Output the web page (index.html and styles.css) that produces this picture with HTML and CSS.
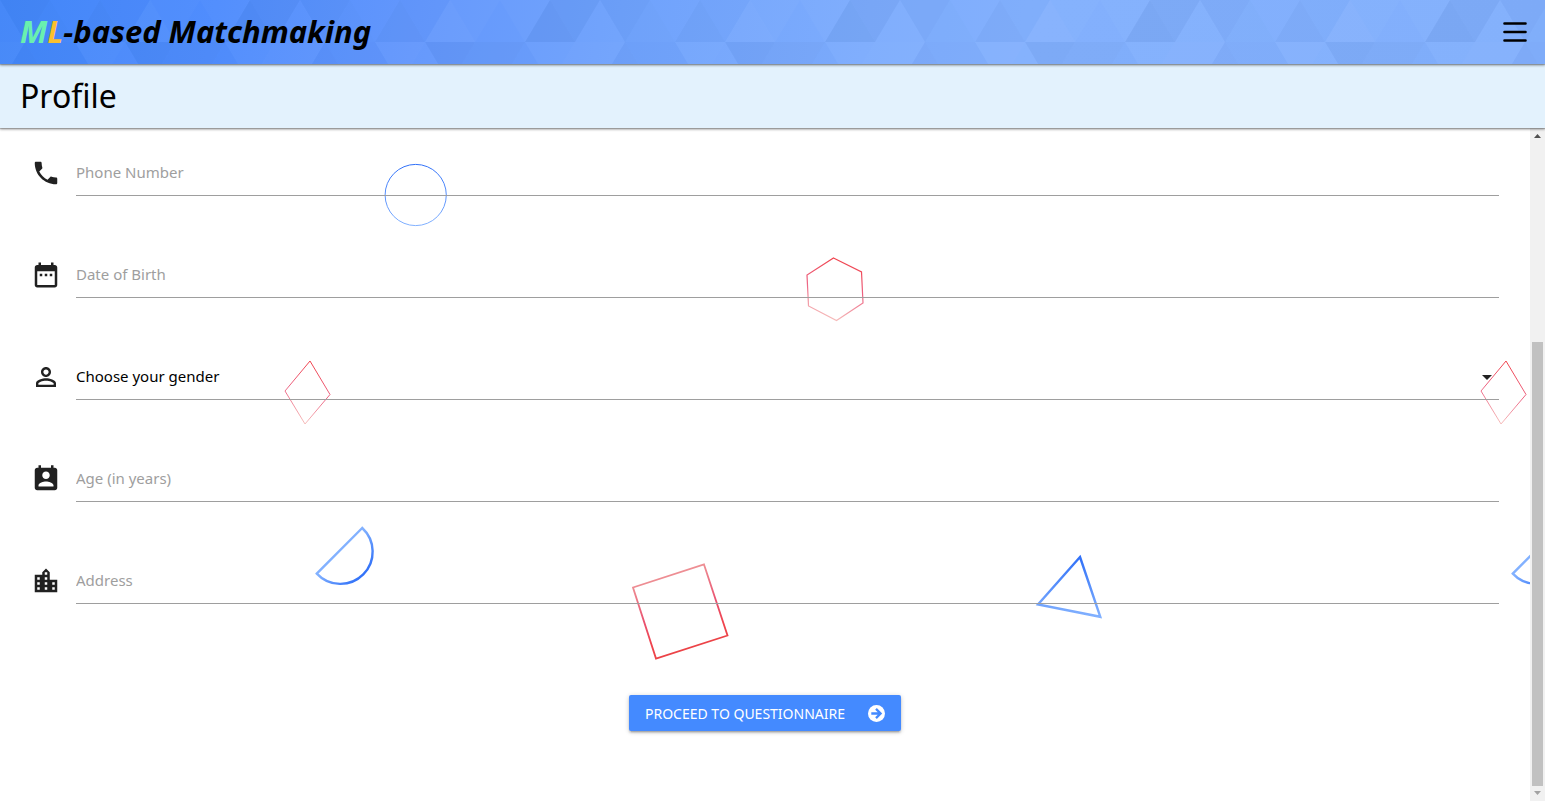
FILE: index.html
```html
<!DOCTYPE html>
<html lang="en">
<head>
<meta charset="utf-8">
<title>ML-based Matchmaking</title>
<link rel="stylesheet" href="styles.css">
</head>
<body>
<header class="topbar">
  <svg class="topbar-art" aria-hidden="true">
    <defs>
      <pattern id="tri" width="300" height="86" patternUnits="userSpaceOnUse">
        <g fill="#fff">
          <path opacity=".04" d="M150 0l25 42h-50z"/>
          <path opacity=".02" d="M150 0h50l-25 42zM200 0h50l-25 42z"/>
          <path opacity=".02" d="M0 0l25 42H0zM300 0v42h-25z"/>
          <path opacity=".03" d="M75 42h50l-25 42z"/>
          <path opacity=".02" d="M125 42l25 42h-50z"/>
          <path opacity=".02" d="M225 42h50l-25 42z"/>
          <path opacity=".03" d="M275 42l25 42h-50zM275 42h25v42zM0 42h25L0 84z"/>
        </g>
        <g fill="#123a80">
          <path opacity=".045" d="M100 0l25 42H75zM0 0h50L25 42z"/>
          <path opacity=".02" d="M100 0h50l-25 42z"/>
          <path opacity=".01" d="M50 0l25 42H25z"/>
          <path opacity=".065" d="M250 0l25 42h-50z"/>
          <path opacity=".05" d="M250 0h50l-25 42z"/>
          <path opacity=".05" d="M125 42h50l-25 42z"/>
          <path opacity=".035" d="M175 42l25 42h-50zM175 42h50l-25 42z"/>
          <path opacity=".02" d="M225 42l25 42h-50z"/>
          <path opacity=".04" d="M25 42l25 42H0z"/>
          <path opacity=".025" d="M25 42h50L50 84zM75 42l25 42H50z"/>
        </g>
      </pattern>
    </defs>
    <rect width="100%" height="100%" fill="url(#tri)"/>
  </svg>
  <a class="brand" href="#"><span class="brand-m">M</span><span class="brand-l">L</span>-based Matchmaking</a>
  <button class="menu" type="button" aria-label="Menu">
    <svg width="24" height="22" viewBox="0 0 24 22" aria-hidden="true"><path d="M1.500 2.500h21M1.500 11h21M1.500 19.500h21" stroke="#000" stroke-width="2.600" stroke-linecap="round"/></svg>
  </button>
</header>
<div class="titlebar"><h1>Profile</h1></div>
<main class="page">
  <div class="content">
    <svg class="shapes" aria-hidden="true">
      <defs>
        <linearGradient id="blue" x1="0" y1="0" x2="0" y2="1"><stop offset="0" stop-color="#3070f8"/><stop offset="1" stop-color="#82b1ff"/></linearGradient>
        <linearGradient id="blueDiag" x1=".43" y1=".43" x2=".85" y2=".85"><stop offset="0" stop-color="#82b1ff"/><stop offset="1" stop-color="#2f70f8"/></linearGradient>
        <linearGradient id="red" x1=".6" y1="0" x2=".4" y2="1"><stop offset="0" stop-color="#f0434c"/><stop offset=".5" stop-color="#ec6383"/><stop offset="1" stop-color="#f6c0bd"/></linearGradient>
        <linearGradient id="redUp" x1=".35" y1="0" x2=".65" y2="1"><stop offset="0" stop-color="#efa09e"/><stop offset=".5" stop-color="#e9516f"/><stop offset=".75" stop-color="#f0434c"/><stop offset="1" stop-color="#e84343"/></linearGradient>
        <pattern id="scatter" width="1196" height="700" patternUnits="userSpaceOnUse">
          <g fill="none">
            <circle cx="415.700" cy="67" r="30.600" stroke="url(#blue)"/>
            <path d="M833.500 130L861.500 144L863 175L836.500 192.500L808.500 178L807 147Z" stroke="url(#red)" stroke-width="1.200"/>
            <path d="M310 233L330 266.500L305 296L285 263Z" stroke="url(#red)"/>
            <path d="M362.200 400L316.800 445.600A32.200 32.200 0 1 0 362.200 400Z" stroke="url(#blueDiag)" stroke-width="2.400"/>
            <path d="M704 436.500L727.500 507.500L656 530.500L633 459.500Z" stroke="url(#redUp)" stroke-width="1.800"/>
            <path d="M1080 429L1100.300 488.800L1038 476.500Z" stroke="url(#blue)" stroke-width="2.400"/>
          </g>
        </pattern>
      </defs>
      <rect width="100%" height="100%" fill="url(#scatter)"/>
    </svg>
    <form class="form">
      <div class="field">
        <svg class="icon" viewBox="0 0 24 24" aria-hidden="true"><path d="M6.620 10.790c1.440 2.830 3.760 5.140 6.590 6.590l2.200-2.200c.27-.27.67-.36 1.020-.24 1.120.37 2.330.57 3.570.57.55 0 1 .45 1 1V20c0 .55-.45 1-1 1-9.390 0-17-7.610-17-17 0-.55.45-1 1-1h3.500c.55 0 1 .45 1 1 0 1.250.2 2.450.57 3.570.11.35.03.74-.25 1.020l-2.200 2.200z"/></svg>
        <input class="control" type="tel" aria-label="Phone Number" placeholder="Phone Number">
      </div>
      <div class="field">
        <svg class="icon" viewBox="0 0 24 24" aria-hidden="true"><path d="M9 11H7v2h2v-2zm4 0h-2v2h2v-2zm4 0h-2v2h2v-2zm2-7h-1V2h-2v2H8V2H6v2H5c-1.110 0-1.990.9-1.990 2L3 20c0 1.100.89 2 2 2h14c1.100 0 2-.9 2-2V6c0-1.100-.9-2-2-2zm0 16H5V9h14v11z"/></svg>
        <input class="control" type="text" aria-label="Date of Birth" placeholder="Date of Birth">
      </div>
      <div class="field">
        <svg class="icon" viewBox="0 0 24 24" aria-hidden="true"><path d="M12 5.900c1.160 0 2.100.94 2.100 2.100s-.94 2.100-2.100 2.100S9.900 9.160 9.900 8s.94-2.100 2.100-2.100m0 9c2.970 0 6.100 1.460 6.100 2.100v1.100H5.900V17c0-.64 3.130-2.100 6.100-2.100M12 4C9.790 4 8 5.790 8 8s1.790 4 4 4 4-1.790 4-4-1.790-4-4-4zm0 9c-2.670 0-8 1.340-8 4v3h16v-3c0-2.660-5.330-4-8-4z"/></svg>
        <select class="control select" aria-label="Gender"><option>Choose your gender</option><option>Male</option><option>Female</option></select>
        <svg class="caret" viewBox="0 0 10 5" aria-hidden="true"><path d="M0 0h10L5 5z"/></svg>
      </div>
      <div class="field">
        <svg class="icon" viewBox="0 0 24 24" aria-hidden="true"><path d="M19 3h-1V1h-2v2H8V1H6v2H5c-1.110 0-2 .9-2 2v14c0 1.100.89 2 2 2h14c1.100 0 2-.9 2-2V5c0-1.100-.9-2-2-2zm-7 3c1.660 0 3 1.340 3 3s-1.340 3-3 3-3-1.340-3-3 1.340-3 3-3zm6 12H6v-1c0-2 4-3.100 6-3.100s6 1.100 6 3.100v1z"/></svg>
        <input class="control" type="text" aria-label="Age (in years)" placeholder="Age (in years)">
      </div>
      <div class="field">
        <svg class="icon" viewBox="0 0 24 24" aria-hidden="true"><path d="M15 11V5l-3-3-3 3v2H3v14h18V11h-6zm-8 8H5v-2h2v2zm0-4H5v-2h2v2zm0-4H5V9h2v2zm6 8h-2v-2h2v2zm0-4h-2v-2h2v2zm0-4h-2V9h2v2zm0-4h-2V5h2v2zm6 12h-2v-2h2v2zm0-4h-2v-2h2v2z"/></svg>
        <input class="control" type="text" aria-label="Address" placeholder="Address">
      </div>
      <button class="submit" type="button">
        <span>PROCEED TO QUESTIONNAIRE</span>
        <svg width="17" height="17" viewBox="0 0 17 17" aria-hidden="true"><circle cx="8.500" cy="8.500" r="8.500" fill="#fff"/><path d="M3.300 8.500h9M8 3.900l4.600 4.600L8 13.100" fill="none" stroke="#448aff" stroke-width="2.300"/></svg>
      </button>
    </form>
  </div>
  <div class="scrollbar" aria-hidden="true">
    <svg class="arrow" viewBox="0 0 15 15"><path d="M4 10h7L7.500 6z" fill="#505050"/></svg>
    <div class="track"><div class="thumb"></div></div>
    <svg class="arrow" viewBox="0 0 15 15"><path d="M4 5h7L7.500 9z" fill="#a3a3a3"/></svg>
  </div>
</main>
</body>
</html>
```
FILE: styles.css
```css
* { box-sizing: border-box; }

body {
  margin: 0;
  height: 100vh;
  display: flex;
  flex-direction: column;
  overflow: hidden;
  background: #fff;
  color: #000;
  font-family: "Noto Sans", "Open Sans", sans-serif;
}

.topbar,
.titlebar {
  position: relative;
  flex: none;
  height: 64px;
  display: flex;
  align-items: center;
  padding: 0 18px 0 20px;
  box-shadow: 0 2px 2px rgba(0, 0, 0, 0.14), 0 1px 3px rgba(0, 0, 0, 0.2), 0 1px 1px rgba(0, 0, 0, 0.2);
}

.topbar {
  z-index: 3;
  justify-content: space-between;
  background: linear-gradient(100deg, #4286f8 0%, #508dfd 14%, #6397fc 27%, #6fa2fc 40%, #7dacfd 56%, #83b0fd 66%, #82affc 100%);
}

.topbar-art {
  position: absolute;
  inset: 0;
  width: 100%;
  height: 100%;
}

.brand {
  position: relative;
  color: #000;
  font-size: 31px;
  line-height: 62px;
  padding-bottom: 2px;
  font-weight: 700;
  font-style: italic;
  text-decoration: none;
}

.brand-m { color: #69f0ae; }
.brand-l { color: #fbc02d; }

.menu {
  position: relative;
  display: flex;
  padding: 0;
  border: 0;
  background: none;
}

.titlebar {
  z-index: 2;
  background: #e3f2fd;
}

.titlebar h1 {
  margin: 0;
  font-size: 32px;
  line-height: 64px;
  font-weight: 400;
}

.page {
  flex: 1;
  min-height: 0;
  display: flex;
}

.content {
  position: relative;
  flex: 1;
  min-width: 0;
}

.shapes {
  position: absolute;
  inset: 0;
  width: 100%;
  height: 100%;
}

.form {
  position: relative;
  display: flex;
  flex-direction: column;
  gap: 57px;
  padding: 23px 31px;
}

.field {
  position: relative;
  display: flex;
  align-items: flex-start;
  gap: 15px;
}

.icon {
  flex: none;
  width: 30px;
  height: 30px;
  margin-top: 7px;
  fill: #212121;
}

.control {
  flex: 1;
  min-width: 0;
  height: 45px;
  padding: 0 0 2px;
  border: 0;
  border-bottom: 1px solid #9e9e9e;
  border-radius: 0;
  background: transparent;
  color: #000;
  font-family: inherit;
  font-size: 15px;
  outline: none;
}

.control::placeholder {
  color: #9e9e9e;
  opacity: 1;
}

.select {
  appearance: none;
}

.caret {
  position: absolute;
  right: 7px;
  top: 20px;
  width: 10px;
  height: 5px;
  fill: #212121;
  pointer-events: none;
}

.submit {
  align-self: center;
  display: flex;
  align-items: center;
  gap: 23px;
  height: 36px;
  margin-top: 34px;
  padding: 0 16px;
  border: 0;
  border-radius: 2px;
  background: #448aff;
  color: #fff;
  font-family: inherit;
  font-size: 14px;
  white-space: nowrap;
  box-shadow: 0 2px 2px rgba(0, 0, 0, 0.14), 0 3px 1px -2px rgba(0, 0, 0, 0.12), 0 1px 5px rgba(0, 0, 0, 0.2);
}

.scrollbar {
  flex: none;
  width: 15px;
  display: flex;
  flex-direction: column;
  background: #f1f1f1;
}

.arrow {
  width: 15px;
  height: 15px;
}

.track {
  flex: 1;
  display: flex;
  flex-direction: column;
  justify-content: flex-end;
  padding: 0 2px;
}

.thumb {
  height: 69%;
  background: #c1c1c1;
}
```
